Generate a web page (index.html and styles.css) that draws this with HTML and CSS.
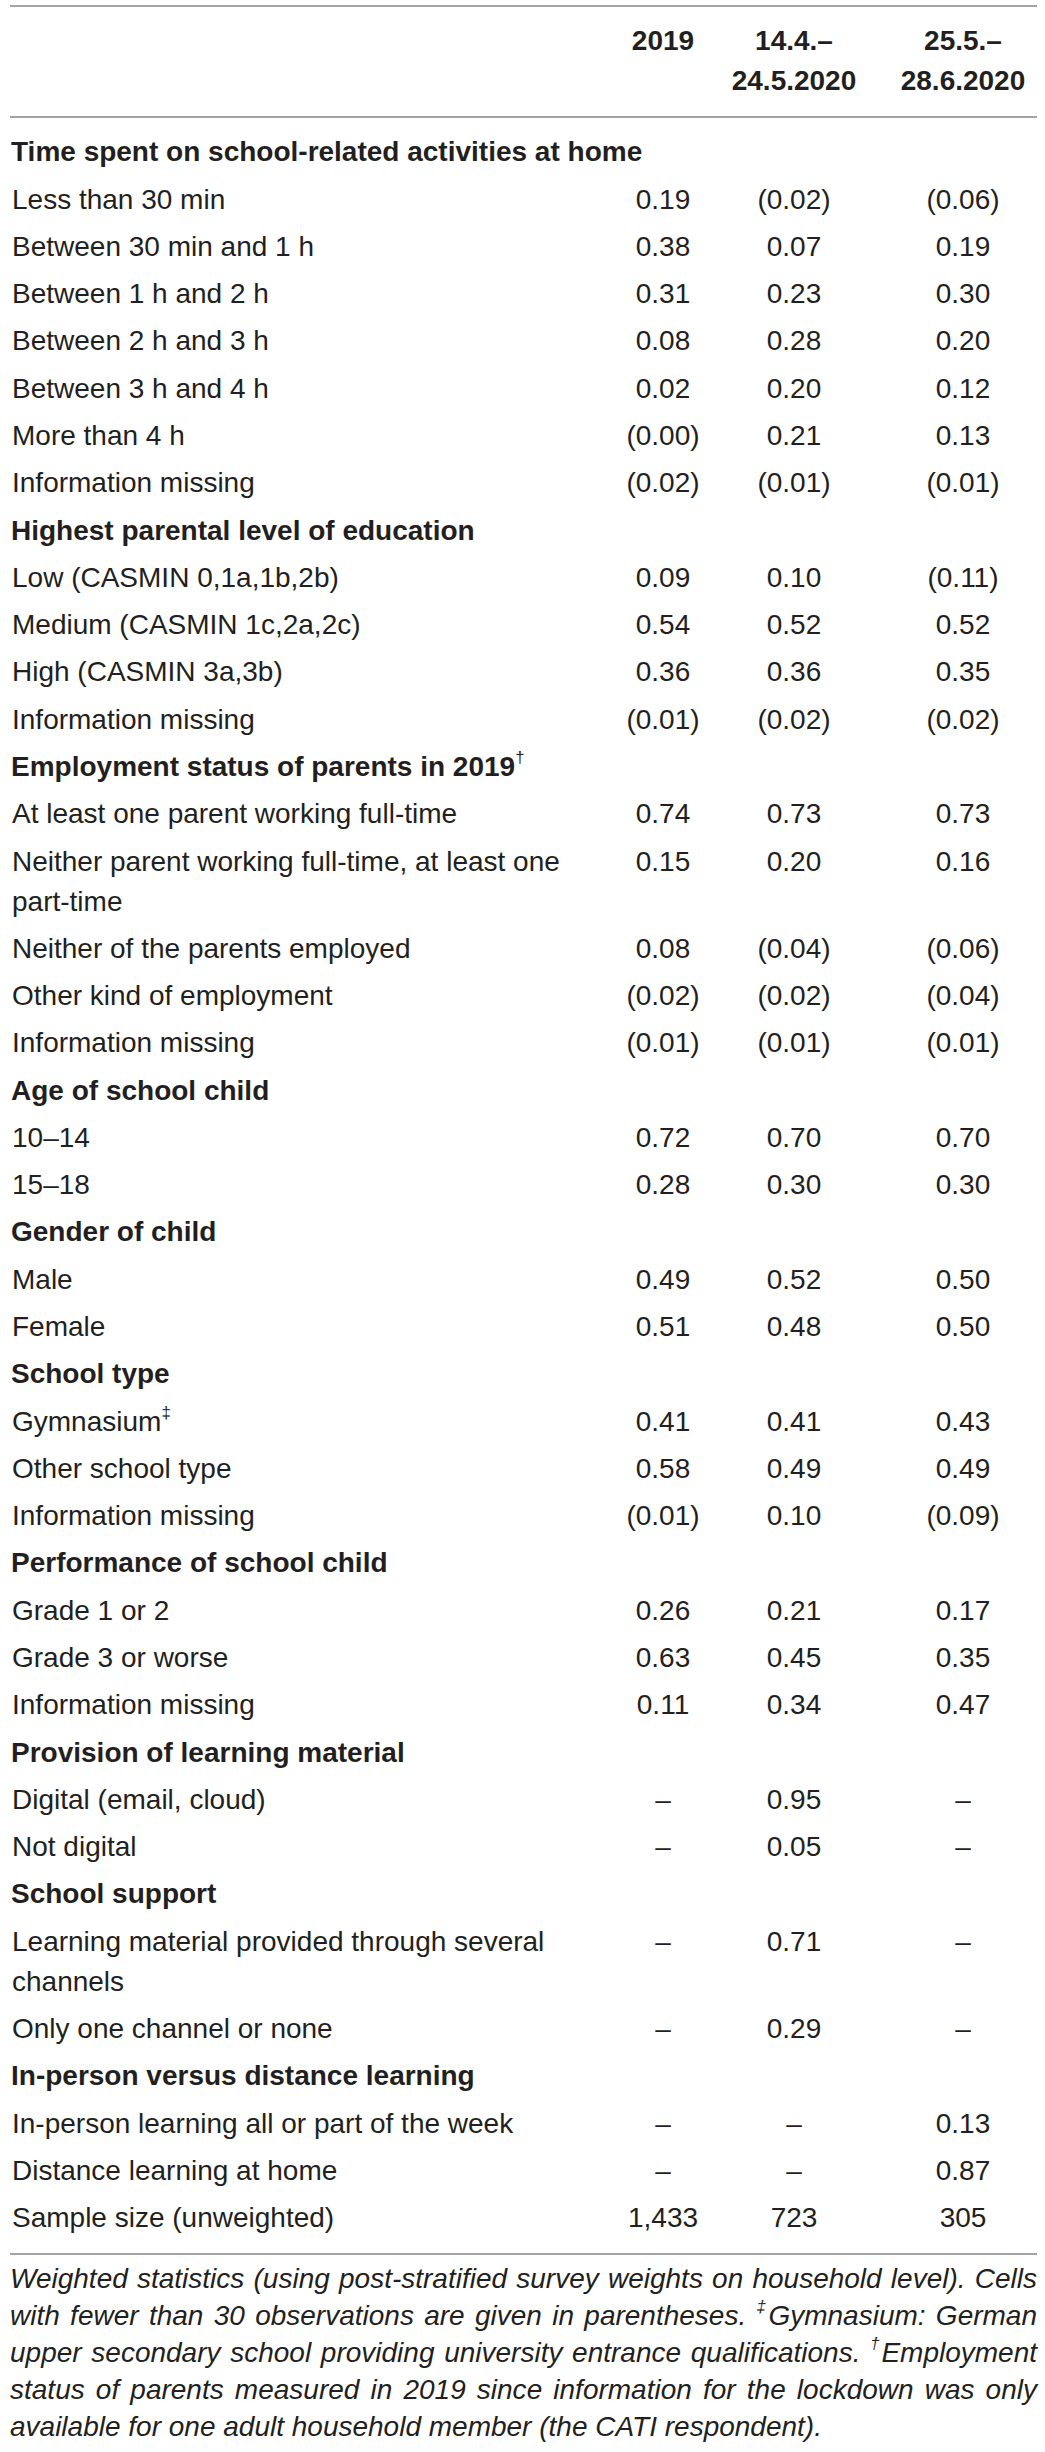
FILE: index.html
```html
<!DOCTYPE html>
<html lang="en">
<head>
<meta charset="utf-8">
<title>Table</title>
<link rel="stylesheet" href="styles.css">
</head>
<body>
<div class="wrap">
<table class="stats">
  <colgroup>
    <col class="c-label">
    <col class="c-one">
    <col class="c-two">
    <col class="c-three">
  </colgroup>
  <thead>
    <tr>
      <th class="label"></th>
      <th class="num">2019</th>
      <th class="num">14.4.–<br>24.5.2020</th>
      <th class="num last-col">25.5.–<br>28.6.2020</th>
    </tr>
  </thead>
  <tbody>
    <tr class="sec first"><td colspan="4">Time spent on school-related activities at home</td></tr>
    <tr><td class="label">Less than 30 min</td><td class="num">0.19</td><td class="num">(0.02)</td><td class="num last-col">(0.06)</td></tr>
    <tr><td class="label">Between 30 min and 1 h</td><td class="num">0.38</td><td class="num">0.07</td><td class="num last-col">0.19</td></tr>
    <tr><td class="label">Between 1 h and 2 h</td><td class="num">0.31</td><td class="num">0.23</td><td class="num last-col">0.30</td></tr>
    <tr><td class="label">Between 2 h and 3 h</td><td class="num">0.08</td><td class="num">0.28</td><td class="num last-col">0.20</td></tr>
    <tr><td class="label">Between 3 h and 4 h</td><td class="num">0.02</td><td class="num">0.20</td><td class="num last-col">0.12</td></tr>
    <tr><td class="label">More than 4 h</td><td class="num">(0.00)</td><td class="num">0.21</td><td class="num last-col">0.13</td></tr>
    <tr><td class="label">Information missing</td><td class="num">(0.02)</td><td class="num">(0.01)</td><td class="num last-col">(0.01)</td></tr>

    <tr class="sec"><td colspan="4">Highest parental level of education</td></tr>
    <tr><td class="label">Low (CASMIN 0,1a,1b,2b)</td><td class="num">0.09</td><td class="num">0.10</td><td class="num last-col">(0.11)</td></tr>
    <tr><td class="label">Medium (CASMIN 1c,2a,2c)</td><td class="num">0.54</td><td class="num">0.52</td><td class="num last-col">0.52</td></tr>
    <tr><td class="label">High (CASMIN 3a,3b)</td><td class="num">0.36</td><td class="num">0.36</td><td class="num last-col">0.35</td></tr>
    <tr><td class="label">Information missing</td><td class="num">(0.01)</td><td class="num">(0.02)</td><td class="num last-col">(0.02)</td></tr>

    <tr class="sec"><td colspan="4">Employment status of parents in 2019<sup class="mark">†</sup></td></tr>
    <tr><td class="label">At least one parent working full-time</td><td class="num">0.74</td><td class="num">0.73</td><td class="num last-col">0.73</td></tr>
    <tr><td class="label">Neither parent working full-time, at least one part-time</td><td class="num">0.15</td><td class="num">0.20</td><td class="num last-col">0.16</td></tr>
    <tr><td class="label">Neither of the parents employed</td><td class="num">0.08</td><td class="num">(0.04)</td><td class="num last-col">(0.06)</td></tr>
    <tr><td class="label">Other kind of employment</td><td class="num">(0.02)</td><td class="num">(0.02)</td><td class="num last-col">(0.04)</td></tr>
    <tr><td class="label">Information missing</td><td class="num">(0.01)</td><td class="num">(0.01)</td><td class="num last-col">(0.01)</td></tr>

    <tr class="sec"><td colspan="4">Age of school child</td></tr>
    <tr><td class="label">10–14</td><td class="num">0.72</td><td class="num">0.70</td><td class="num last-col">0.70</td></tr>
    <tr><td class="label">15–18</td><td class="num">0.28</td><td class="num">0.30</td><td class="num last-col">0.30</td></tr>

    <tr class="sec"><td colspan="4">Gender of child</td></tr>
    <tr><td class="label">Male</td><td class="num">0.49</td><td class="num">0.52</td><td class="num last-col">0.50</td></tr>
    <tr><td class="label">Female</td><td class="num">0.51</td><td class="num">0.48</td><td class="num last-col">0.50</td></tr>

    <tr class="sec"><td colspan="4">School type</td></tr>
    <tr><td class="label">Gymnasium<sup class="mark">‡</sup></td><td class="num">0.41</td><td class="num">0.41</td><td class="num last-col">0.43</td></tr>
    <tr><td class="label">Other school type</td><td class="num">0.58</td><td class="num">0.49</td><td class="num last-col">0.49</td></tr>
    <tr><td class="label">Information missing</td><td class="num">(0.01)</td><td class="num">0.10</td><td class="num last-col">(0.09)</td></tr>

    <tr class="sec"><td colspan="4">Performance of school child</td></tr>
    <tr><td class="label">Grade 1 or 2</td><td class="num">0.26</td><td class="num">0.21</td><td class="num last-col">0.17</td></tr>
    <tr><td class="label">Grade 3 or worse</td><td class="num">0.63</td><td class="num">0.45</td><td class="num last-col">0.35</td></tr>
    <tr><td class="label">Information missing</td><td class="num">0.11</td><td class="num">0.34</td><td class="num last-col">0.47</td></tr>

    <tr class="sec"><td colspan="4">Provision of learning material</td></tr>
    <tr><td class="label">Digital (email, cloud)</td><td class="num">–</td><td class="num">0.95</td><td class="num last-col">–</td></tr>
    <tr><td class="label">Not digital</td><td class="num">–</td><td class="num">0.05</td><td class="num last-col">–</td></tr>

    <tr class="sec"><td colspan="4">School support</td></tr>
    <tr><td class="label">Learning material provided through several channels</td><td class="num">–</td><td class="num">0.71</td><td class="num last-col">–</td></tr>
    <tr><td class="label">Only one channel or none</td><td class="num">–</td><td class="num">0.29</td><td class="num last-col">–</td></tr>

    <tr class="sec"><td colspan="4">In-person versus distance learning</td></tr>
    <tr><td class="label">In-person learning all or part of the week</td><td class="num">–</td><td class="num">–</td><td class="num last-col">0.13</td></tr>
    <tr><td class="label">Distance learning at home</td><td class="num">–</td><td class="num">–</td><td class="num last-col">0.87</td></tr>
    <tr class="final"><td class="label">Sample size (unweighted)</td><td class="num">1,433</td><td class="num">723</td><td class="num last-col">305</td></tr>
  </tbody>
</table>
<p class="note">Weighted statistics (using post-stratified survey weights on household level). Cells with fewer than 30 observations are given in parentheses. <sup class="mark">‡</sup>Gymnasium: German upper secondary school providing university entrance qualifications. <sup class="mark">†</sup>Employment status of parents measured in 2019 since information for the lockdown was only available for one adult household member (the CATI respondent).</p>
</div>
</body>
</html>
```

FILE: styles.css
```css
html, body {
  margin: 0;
  padding: 0;
  background: #ffffff;
}

body {
  font-family: "Liberation Sans", Arial, sans-serif;
  color: #231f20;
  font-size: 28px;
}

.wrap {
  padding: 5px 8px 0 10px;
}

.stats {
  width: 1027px;
  border-collapse: collapse;
  table-layout: fixed;
  border-top: 2px solid #a3a3a3;
  border-bottom: 2px solid #a3a3a3;
}

.c-label { width: 603px; }
.c-one { width: 100px; }
.c-two { width: 162px; }
.c-three { width: 162px; }

.stats th,
.stats td {
  padding: 3.65px 0;
  line-height: 40px;
  vertical-align: top;
  font-weight: normal;
}

.stats thead th {
  padding: 14px 0 15px;
  font-weight: bold;
  border-bottom: 2px solid #a3a3a3;
}

.stats .label {
  text-align: left;
  padding-left: 2px;
}

.stats .num {
  text-align: center;
}

.stats .last-col {
  padding-left: 14px;
}

.stats .sec td {
  font-weight: bold;
  padding-left: 1px;
}

.stats .first td {
  padding-top: 14.3px;
}

.stats .final td {
  padding-bottom: 14.6px;
}

.mark {
  font-size: 0.6em;
  line-height: 0;
  vertical-align: 0.75em;
  font-weight: normal;
}

.note {
  margin: 5px 0 0;
  width: 1027px;
  font-style: italic;
  line-height: 37px;
  text-align: justify;
}
```
